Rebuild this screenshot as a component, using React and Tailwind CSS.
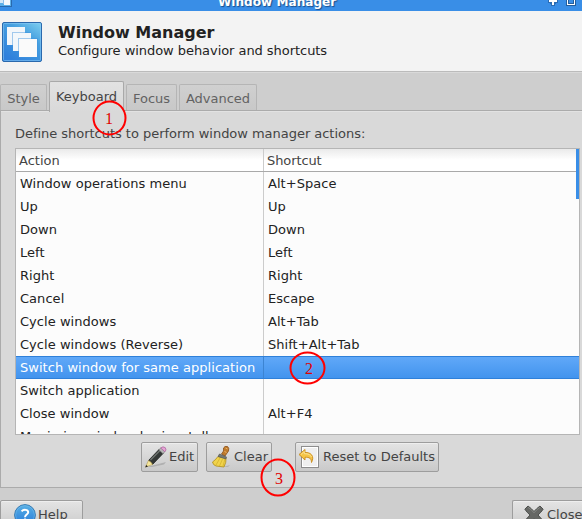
import React from "react";

const rows = [
  ["Window operations menu", "Alt+Space"],
  ["Up", "Up"],
  ["Down", "Down"],
  ["Left", "Left"],
  ["Right", "Right"],
  ["Cancel", "Escape"],
  ["Cycle windows", "Alt+Tab"],
  ["Cycle windows (Reverse)", "Shift+Alt+Tab"],
  ["Switch window for same application", ""],
  ["Switch application", ""],
  ["Close window", "Alt+F4"],
  ["Maximize window horizontally", ""],
];

function WindowsIcon({ className }) {
  return (
    <svg viewBox="0 0 40 40" className={className}>
      <defs>
        <linearGradient id="wi" x1="1" y1="0" x2="0.3" y2="1">
          <stop offset="0" stopColor="#7fd0f0" />
          <stop offset="0.4" stopColor="#46a0e0" />
          <stop offset="1" stopColor="#2f80dc" />
        </linearGradient>
      </defs>
      <rect x="0.5" y="0.5" width="39" height="39" rx="1.5" fill="url(#wi)" stroke="#2a69ad" />
      <rect x="1.5" y="1.5" width="37" height="37" rx="1" fill="none" stroke="#8ccbf5" strokeOpacity="0.55" />
      <rect x="5" y="5" width="18" height="18" fill="#f2f6fa" />
      <rect x="10" y="10" width="19" height="19" fill="#3d92dd" fillOpacity="0.45" />
      <rect x="11" y="11" width="18" height="18" fill="#f2f7fb" />
      <rect x="16" y="16" width="20" height="20" fill="#3d92dd" fillOpacity="0.45" />
      <rect x="17" y="17" width="18" height="18" fill="#fafafa" />
    </svg>
  );
}

function TitleIcon() {
  return (
    <svg viewBox="0 0 12 11" shapeRendering="crispEdges" className="h-[11px] w-3 shrink-0">
      <path d="M0 0 H12 V7 H0Z" fill="#2a69ad" />
      <path d="M0 0 H11 V6 H0Z" fill="#5cb0ea" />
      <path d="M0 0 H3 V3 H0Z" fill="#d5e8f8" />
      <path d="M4 0 H10 V5 H4Z" fill="#f6f9fc" />
      <path d="M3 0 H4 V4 H3Z" fill="#8dbfeb" />
    </svg>
  );
}

function PencilIcon() {
  return (
    <svg viewBox="0 0 24 24" className="h-6 w-6 shrink-0">
      <path d="M3 22 L22 17 L20 19.500 L8 22Z" fill="#8a8a8a" fillOpacity="0.45" />
      <path d="M4.500 15.500 L15.500 4 L19.500 8 L8.500 19.500Z" fill="#333735" stroke="#202220" strokeWidth="0.8" />
      <path d="M6.500 15 L16 5.500" stroke="#717571" strokeWidth="1.200" />
      <path d="M4.500 15.500 L1.500 22 L8.500 19.500 Q7.500 17 4.500 15.500Z" fill="#f5e69a" stroke="#b69d51" strokeWidth="0.6" />
      <path d="M1.300 22.500 L2.200 20 L4 21.500Z" fill="#222" />
      <path d="M14.800 4.700 L17 2.800 L21 6.500 L19 8.700Z" fill="#b8b8b8" stroke="#777" strokeWidth="0.6" />
      <path d="M16.700 3 Q19 0.800 21.300 2.700 Q23 5 20.800 6.800Z" fill="#e5a3d5" stroke="#a86298" strokeWidth="0.7" />
    </svg>
  );
}

function BroomIcon() {
  return (
    <svg viewBox="0 0 24 24" className="h-6 w-6 shrink-0">
      <path d="M13 22 L20 20 L18 22Z" fill="#999" fillOpacity="0.5" />
      <path d="M11.500 9 Q14.500 6 13.500 3 Q14.500 0.800 17.500 1.500 Q19.500 3 18.500 6 L15 11Z" fill="#bf7b2c" stroke="#8a511b" strokeWidth="0.8" />
      <path d="M15.500 3 L17.500 4 M14.500 6.500 L16.500 7.500" stroke="#eeb264" strokeWidth="1" />
      <path d="M8 11.500 Q5 15.500 2.500 17 Q3 20 6 21 L14 22 Q16.500 17 16 13Z" fill="#f1d34a" stroke="#ad8c18" strokeWidth="0.8" />
      <path d="M10 13 L6 20 M12.500 14 L9.500 21 M15 14 L13 21" stroke="#d0ae28" strokeWidth="0.7" />
      <path d="M9.500 9 L16.500 12 L15.800 14 L8 11.500Z" fill="#777b76" stroke="#4b4e4a" strokeWidth="0.6" />
    </svg>
  );
}

function RevertIcon() {
  return (
    <svg viewBox="0 0 24 24" className="h-6 w-6 shrink-0">
      <rect x="3.500" y="1.500" width="17" height="21" fill="#efefef" stroke="#8d8d8d" />
      <rect x="4.500" y="2.500" width="15" height="19" fill="none" stroke="#fff" />
      <path d="M1 9.500 L7 4.500 V7.500 C12.500 7 17 11 13.500 17.500 C13.500 13.500 11.500 12 7 12.300 V15Z" fill="#f5c445" stroke="#ca8b1a" strokeWidth="0.9" strokeLinejoin="round" />
      <path d="M3 9.500 L6.300 6.500 V8.700 C10.500 8.500 12.500 10 13.500 12" fill="none" stroke="#fbe59a" strokeWidth="0.9" />
    </svg>
  );
}

function HelpIcon() {
  return (
    <svg viewBox="0 0 22 22" className="h-[22px] w-[22px] shrink-0">
      <defs>
        <linearGradient id="hp" x1="0" y1="0" x2="0" y2="1">
          <stop offset="0" stopColor="#58b0e4" />
          <stop offset="1" stopColor="#287bdb" />
        </linearGradient>
      </defs>
      <circle cx="11" cy="11" r="10.400" fill="url(#hp)" stroke="#2870ad" strokeWidth="0.9" />
      <circle cx="11" cy="11" r="9.400" fill="none" stroke="#80c5ef" strokeOpacity="0.6" strokeWidth="0.8" />
      <path d="M7.600 7.300 C9.300 5.300 14.200 5.200 14.200 8.200 C14.200 10.500 11 10.700 11 13.200" fill="none" stroke="#fff" strokeWidth="2" />
      <rect x="10" y="14.500" width="2.100" height="2.200" fill="#fff" />
    </svg>
  );
}

function CloseIcon() {
  return (
    <svg viewBox="0 0 20 20" className="h-5 w-5 shrink-0">
      <path d="M4 1 L0.800 4.200 Q3 7.500 6 10 L1 15.500 L4.500 19 L10 13.500 L15.500 19 L19 15.500 L14 10 Q17 7.500 19.200 4.200 L16 1 Q12.500 3.500 10 6.500 Q7.500 3.500 4 1Z" fill="#666865" stroke="#454745" strokeWidth="0.9" strokeLinejoin="round" />
      <path d="M4 2.300 Q7.500 4.500 10 7.800 Q12.500 4.500 16 2.300" fill="none" stroke="#8d8f8c" strokeWidth="0.8" />
    </svg>
  );
}

const buttonBase =
  "flex items-center rounded-[2px] border border-[#9d9d9d] bg-linear-to-b from-[#e4e4e4] to-[#c9c9c9] text-[#444] shadow-[inset_0_1px_0_#eeeeee]";

const idleTab =
  "h-[26px] rounded-t-[2px] border border-b-0 border-[#b5b5b5] bg-linear-to-b from-[#d0d0d0] to-[#c8c8c8] pt-[4px] text-center text-[#626262]";

export default function App() {
  return (
    <div className="relative flex h-[519px] w-[582px] flex-col overflow-hidden bg-[#cecece] font-['DejaVu_Sans',sans-serif] text-[13px] leading-5 whitespace-nowrap text-[#222]">
      <header className="flex h-[11px] shrink-0 items-end overflow-hidden bg-[#398ee7]">
        <TitleIcon />
        <div className="w-[530px] pl-[206px] text-[12.1px] leading-[17px] font-bold text-white [text-shadow:1px_1px_1px_#1b4f8c]">
          Window Manager
        </div>
        <svg viewBox="0 0 40 11" shapeRendering="crispEdges" className="h-[11px] w-[40px] shrink-0">
          <path d="M6 0 H16 V3 H14 V4 H13 V6 H9 V4 H8 V3 H6Z" fill="#235e9e" fillOpacity="0.7" />
          <path d="M7 0 H15 V2 H12 V5 H10 V2 H7Z" fill="#fff" />
          <path d="M24 0 H34 V6 H24Z" fill="#235e9e" />
          <path d="M25 0 H33 V5 H25Z" fill="#fff" />
          <path d="M26 0 H32 V4 H26Z" fill="#235e9e" />
          <path d="M27 0 H31 V3 H27Z" fill="#398ee7" />
        </svg>
      </header>

      <section className="flex h-[62px] shrink-0 border-b border-[#d9d9d9] bg-[#f3f3f3]">
        <div className="flex w-full border-b border-[#bbbbbb] pt-[11px] pl-[2px]">
          <WindowsIcon className="h-10 w-10" />
          <div className="pl-4">
            <h1 className="pt-px text-[16px] leading-5 font-bold">Window Manager</h1>
            <p className="-mt-[2px] leading-5 tracking-[-0.05px]">Configure window behavior and shortcuts</p>
          </div>
        </div>
      </section>

      <nav className="z-10 flex h-[38px] shrink-0 items-end gap-[2px]">
        <div className={`${idleTab} mb-px w-[47px]`}>Style</div>
        <div className="-mb-px h-[31px] w-[75px] rounded-t-[2px] border border-b-0 border-[#a9a9a9] bg-linear-to-b from-[#e2e2e2] to-[#d9d9d9] pt-[5px] text-center text-[#444]">
          Keyboard
        </div>
        <div className={`${idleTab} mb-px w-[51px]`}>Focus</div>
        <div className={`${idleTab} mb-px w-[78px]`}>Advanced</div>
      </nav>

      <main className="-mt-px flex h-[378px] shrink-0 flex-col border-y border-l border-[#ababab] bg-[#d9d9d9] shadow-[inset_0_1px_0_#e2e2e2]">
        <p className="h-[37px] pt-[13px] pl-[14px] tracking-[-0.03px] text-[#444]">
          Define shortcuts to perform window manager actions:
        </p>
        <div className="ml-[14px] flex h-[287px] w-[565px] shrink-0 overflow-hidden border border-[#b5b5b5] bg-[#fcfcfc]">
          <div className="flex w-[563px] shrink-0 flex-col">
            <div className="flex h-[23px] shrink-0">
              <div className="flex grow border-b border-[#a9a9a9] bg-linear-to-b from-[#eaeaea] to-white to-50% text-[#444]">
                <div className="w-[248px] border-r border-[#cccccc] pt-[2px] pl-[3px]">Action</div>
                <div className="pt-[2px] pl-[3px] tracking-[-0.1px]">Shortcut</div>
              </div>
              <div className="z-10 h-[50px] w-[3px] bg-[#398ee7]" />
            </div>
            {rows.map(([action, shortcut], i) => (
              <div
                key={action}
                className={
                  i === 8
                    ? "flex h-[23px] shrink-0 border-y border-[#2f80d9] bg-linear-to-b from-[#60a8f8] to-[#4294ee] tracking-[0.04px] text-white"
                    : "flex h-[23px] shrink-0 border-y border-transparent tracking-[0.04px]"
                }
              >
                <div
                  className={
                    i === 8
                      ? "w-[248px] border-r border-[#3c84d2] pt-px pl-[4px]"
                      : "-my-px w-[248px] border-r border-[#cccccc] pt-[2px] pl-[4px]"
                  }
                >
                  {action}
                </div>
                <div className="pt-px pl-[4px]">{shortcut}</div>
              </div>
            ))}
          </div>
        </div>
        <div className="flex pt-[7px] pl-[140px]">
          <div className={`${buttonBase} h-[30px] w-[57px] pl-[2px]`}>
            <PencilIcon />
            <span className="pb-px pl-px">Edit</span>
          </div>
          <div className={`${buttonBase} ml-[8px] h-[30px] w-[66px] pl-[3px]`}>
            <BroomIcon />
            <span className="pb-px">Clear</span>
          </div>
          <div className={`${buttonBase} ml-[23px] h-[30px] w-[144px] pl-[2px]`}>
            <RevertIcon />
            <span className="pb-px pl-px">Reset to Defaults</span>
          </div>
        </div>
      </main>

      <footer className="flex h-[31px] shrink-0 justify-between pt-[12px]">
        <div className={`${buttonBase} h-[30px] w-[83px] pl-[13px]`}>
          <HelpIcon />
          <span className="pb-px pl-[2px]">Help</span>
        </div>
        <div className={`${buttonBase} h-[30px] w-[70px] overflow-hidden rounded-r-none border-r-0 pl-[11px]`}>
          <CloseIcon />
          <span className="pb-px pl-[3px]">Close</span>
        </div>
      </footer>

      <svg
        viewBox="0 0 582 519"
        className="pointer-events-none absolute inset-0 z-20 h-[519px] w-[582px] font-['Liberation_Serif',serif] text-[16px]"
      >
        <g fill="none" stroke="#ff0000" strokeWidth="2">
          <ellipse cx="109.500" cy="118" rx="16" ry="16.500" />
          <ellipse cx="307.500" cy="368" rx="17" ry="15.500" />
          <ellipse cx="278" cy="477.500" rx="16.500" ry="18" />
        </g>
        <g fill="#e00000" textAnchor="middle">
          <text x="109" y="124">1</text>
          <text x="309" y="374">2</text>
          <text x="279" y="484">3</text>
        </g>
      </svg>
    </div>
  );
}
